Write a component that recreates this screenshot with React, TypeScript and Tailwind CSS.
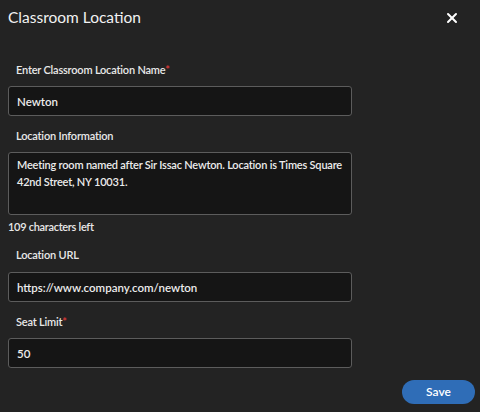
import { X } from "lucide-react";

const Label = ({ text, required }: { text: string; required?: boolean }) => (
  <label className="block px-2 text-[11px] leading-4 font-semibold tracking-[-0.2px] text-[#e8e8e8]">
    {text}
    {required && <span className="text-[#e03a3a]">*</span>}
  </label>
);

const inputCls =
  "w-[344px] h-[30px] rounded-[3px] border border-[#5c5c5c] bg-[#151515] px-2 text-[11.5px] font-semibold text-[#ececec] outline-none";

export default function App() {
  return (
    <div
      className="w-[480px] h-[412px] bg-[#232323] px-2 text-white overflow-hidden"
      style={{ fontFamily: "Lato, 'Open Sans', sans-serif" }}
    >
      <div className="flex h-9 items-center justify-between">
        <h1 className="text-[15.5px] font-normal text-[#f2f2f2]">Classroom Location</h1>
        <button className="mr-[12px] text-white">
          <X size={16} strokeWidth={3} />
        </button>
      </div>

      <div className="mt-[26px]">
        <Label text="Enter Classroom Location Name" required />
        <input className={`${inputCls} mt-2`} defaultValue="Newton" />
      </div>

      <div className="mt-3">
        <Label text="Location Information" />
        <textarea
          className="mt-2 block h-[63px] w-[344px] resize-none rounded-[3px] border border-[#5c5c5c] bg-[#151515] pl-2 pr-1 pt-[3px] text-[11px] leading-[17px] font-semibold tracking-[-0.2px] text-[#ececec] outline-none"
          defaultValue="Meeting room named after Sir Issac Newton. Location is Times Square 42nd Street, NY 10031."
        />
        <p className="mt-1 text-[11px] leading-4 font-semibold tracking-[-0.3px] text-[#e8e8e8]">109 characters left</p>
      </div>

      <div className="mt-3">
        <Label text="Location URL" />
        <input className={`${inputCls} mt-[9px]`} defaultValue="https://www.company.com/newton" />
      </div>

      <div className="mt-3">
        <Label text="Seat Limit" required />
        <input className={`${inputCls} mt-2`} defaultValue="50" />
      </div>

      <div className="mt-3 flex justify-end">
        <button className="-mr-[3px] h-6 w-[73px] rounded-full bg-[#2f6db7] text-[12px] font-semibold text-white">
          Save
        </button>
      </div>
    </div>
  );
}
